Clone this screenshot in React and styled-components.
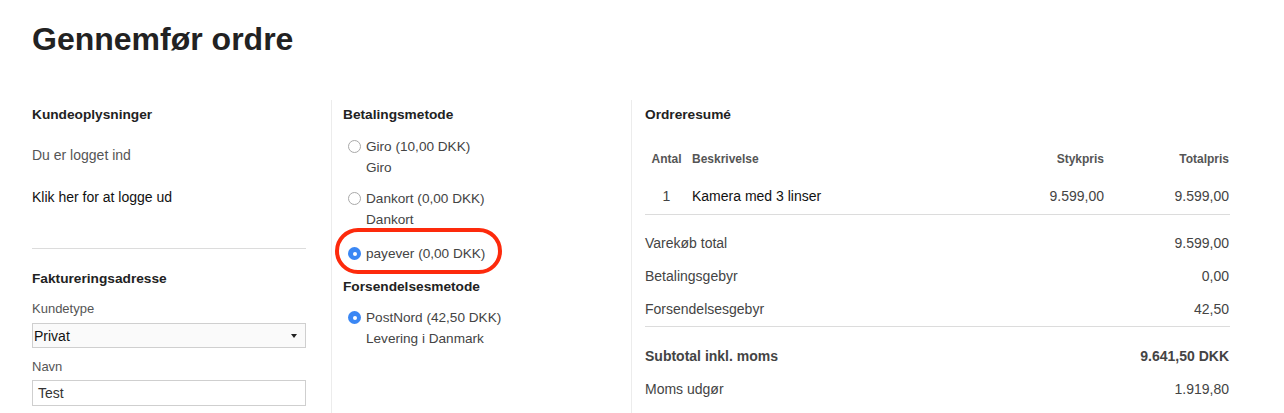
import React from "react";
import styled, { createGlobalStyle } from "styled-components";

const GlobalStyle = createGlobalStyle`
  body {
    margin: 0;
    background: #fff;
    font-family: "Liberation Sans", Arial, sans-serif;
    color: #222;
  }
`;

const paymentMethods = [
  { id: "giro", title: "Giro (10,00 DKK)", desc: "Giro" },
  { id: "dankort", title: "Dankort (0,00 DKK)", desc: "Dankort" },
  { id: "payever", title: "payever (0,00 DKK)", checked: true, marked: true },
];

const summaryRows = [
  { label: "Varekøb total", value: "9.599,00" },
  { label: "Betalingsgebyr", value: "0,00" },
  { label: "Forsendelsesgebyr", value: "42,50" },
];

function Radio({ checked }) {
  return <RadioDot $checked={checked} />;
}

function App() {
  return (
    <Page>
      <GlobalStyle />
      <Title>Gennemfør ordre</Title>
      <Columns>
        <CustomerCol>
          <Heading>Kundeoplysninger</Heading>
          <Muted $top={20}>Du er logget ind</Muted>
          <LogoutLink>Klik her for at logge ud</LogoutLink>
          <Rule />
          <Heading $top={20}>Faktureringsadresse</Heading>
          <FieldLabel $top={11}>Kundetype</FieldLabel>
          <Select>
            <span>Privat</span>
            <Caret />
          </Select>
          <FieldLabel $top={10}>Navn</FieldLabel>
          <TextInput>Test</TextInput>
        </CustomerCol>

        <MethodCol>
          <Heading>Betalingsmetode</Heading>
          <MethodList>
            {paymentMethods.map((m, i) => (
              <Method key={m.id} $top={i === 2 ? 13 : i === 0 ? 11 : 10}>
                <MethodLine>
                  <Radio checked={m.checked} />
                  {m.title}
                </MethodLine>
                {m.desc && <MethodDesc>{m.desc}</MethodDesc>}
                {m.marked && <Marker />}
              </Method>
            ))}
          </MethodList>
          <Heading $top={13}>Forsendelsesmetode</Heading>
          <Method $top={10}>
            <MethodLine>
              <Radio checked />
              PostNord (42,50 DKK)
            </MethodLine>
            <MethodDesc>Levering i Danmark</MethodDesc>
          </Method>
        </MethodCol>

        <SummaryCol>
          <Heading>Ordreresumé</Heading>
          <TableRow $height={37} $head>
            <Qty>Antal</Qty>
            <Desc>Beskrivelse</Desc>
            <Price>Stykpris</Price>
            <Price>Totalpris</Price>
          </TableRow>
          <TableRow $height={37} $line>
            <Qty>1</Qty>
            <Desc $dark>Kamera med 3 linser</Desc>
            <Price>9.599,00</Price>
            <Price>9.599,00</Price>
          </TableRow>
          <SummaryBlock $top={11}>
            {summaryRows.map((r) => (
              <SumRow key={r.label}>
                <span>{r.label}</span>
                <span>{r.value}</span>
              </SumRow>
            ))}
          </SummaryBlock>
          <SumRule />
          <SummaryBlock $top={12}>
            <SumRow $bold>
              <span>Subtotal inkl. moms</span>
              <span>9.641,50 DKK</span>
            </SumRow>
            <SumRow>
              <span>Moms udgør</span>
              <span>1.919,80</span>
            </SumRow>
          </SummaryBlock>
        </SummaryCol>
      </Columns>
    </Page>
  );
}

const Page = styled.div`
  padding: 21px 0 0 32px;
  height: 413px;
  box-sizing: border-box;
  overflow: hidden;
`;

const Title = styled.h1`
  margin: 0;
  font-size: 32px;
  line-height: 37px;
  font-weight: 700;
  color: #222;
`;

const Columns = styled.div`
  margin-top: 42px;
  display: grid;
  grid-template-columns: 299px 300px 599px;
  min-height: 320px;
`;

const CustomerCol = styled.div`
  padding: 5px 25px 0 0;
  display: flex;
  flex-direction: column;
`;

const MethodCol = styled.div`
  border-left: 1px solid #ececec;
  padding: 5px 0 0 11px;
  display: flex;
  flex-direction: column;
`;

const SummaryCol = styled.div`
  border-left: 1px solid #ececec;
  padding: 5px 0 0 13px;
  display: flex;
  flex-direction: column;
`;

const Heading = styled.h3`
  margin: ${(p) => p.$top || 0}px 0 0;
  font-size: 13.7px;
  line-height: 20px;
  font-weight: 700;
  color: #222;
`;

const Muted = styled.div`
  margin-top: ${(p) => p.$top || 0}px;
  font-size: 14px;
  line-height: 20px;
  color: #555;
`;

const LogoutLink = styled.a`
  margin-top: 22px;
  font-size: 14px;
  line-height: 20px;
  color: #111;
  cursor: pointer;
`;

const Rule = styled.hr`
  margin: 41px 0 0;
  border: 0;
  border-top: 1px solid #dcdcdc;
`;

const FieldLabel = styled.label`
  margin-top: ${(p) => p.$top || 0}px;
  font-size: 13px;
  line-height: 18px;
  color: #555;
`;

const Select = styled.div`
  margin-top: 5px;
  height: 25px;
  box-sizing: border-box;
  border: 1px solid #cfcfcf;
  background: #fafafa;
  display: flex;
  align-items: center;
  justify-content: space-between;
  padding: 0 8px 0 1px;
  font-size: 14px;
  color: #111;
`;

const Caret = styled.span`
  width: 0;
  height: 0;
  border-left: 3.5px solid transparent;
  border-right: 3.5px solid transparent;
  border-top: 4px solid #222;
`;

const TextInput = styled.div`
  margin-top: 4px;
  height: 26px;
  box-sizing: border-box;
  border: 1px solid #cfcfcf;
  background: #fff;
  display: flex;
  align-items: center;
  padding-left: 5px;
  font-size: 14px;
  color: #333;
`;

const MethodList = styled.div`
  display: flex;
  flex-direction: column;
`;

const Method = styled.div`
  position: relative;
  margin-top: ${(p) => p.$top || 0}px;
  padding-left: 5px;
  font-size: 13.6px;
  color: #444;
`;

const MethodLine = styled.div`
  display: flex;
  align-items: center;
  gap: 5px;
  line-height: 21px;
`;

const MethodDesc = styled.div`
  padding-left: 18px;
  line-height: 21px;
`;

const RadioDot = styled.span`
  width: 13px;
  height: 13px;
  box-sizing: border-box;
  border-radius: 50%;
  flex-shrink: 0;
  border: ${(p) => (p.$checked ? "none" : "1px solid #a9a9a9")};
  background: ${(p) => (p.$checked ? "#3a87f4" : "#fff")};
  display: flex;
  align-items: center;
  justify-content: center;
  &::after {
    content: "";
    display: ${(p) => (p.$checked ? "block" : "none")};
    width: 4px;
    height: 4px;
    border-radius: 50%;
    background: #fff;
  }
`;

const Marker = styled.span`
  position: absolute;
  left: -8px;
  top: -15px;
  width: 167px;
  height: 46px;
  box-sizing: border-box;
  border: 4px solid #fd2a0c;
  border-radius: 23px;
  pointer-events: none;
`;

const TableRow = styled.div`
  display: grid;
  grid-template-columns: 43px 277px 140px 125px;
  align-items: center;
  height: ${(p) => p.$height}px;
  margin-top: ${(p) => (p.$head ? 15 : 0)}px;
  border-bottom: ${(p) => (p.$line ? "1px solid #dcdcdc" : "none")};
  font-size: ${(p) => (p.$head ? 12 : 14)}px;
  font-weight: ${(p) => (p.$head ? 700 : 400)};
  color: ${(p) => (p.$head ? "#555" : "#444")};
  width: 585px;
`;

const Qty = styled.span`
  text-align: center;
`;

const Desc = styled.span`
  padding-left: 4px;
  color: ${(p) => (p.$dark ? "#111" : "inherit")};
`;

const Price = styled.span`
  text-align: right;
  padding-right: 1px;
`;

const SummaryBlock = styled.div`
  margin-top: ${(p) => p.$top ?? 12}px;
  width: 585px;
  display: flex;
  flex-direction: column;
`;

const SumRow = styled.div`
  display: flex;
  justify-content: space-between;
  align-items: center;
  height: 33px;
  padding-right: 1px;
  font-size: 14px;
  font-weight: ${(p) => (p.$bold ? 700 : 400)};
  color: #444;
`;

const SumRule = styled.div`
  width: 585px;
  margin-top: 1px;
  border-top: 1px solid #dcdcdc;
`;

export default App;
